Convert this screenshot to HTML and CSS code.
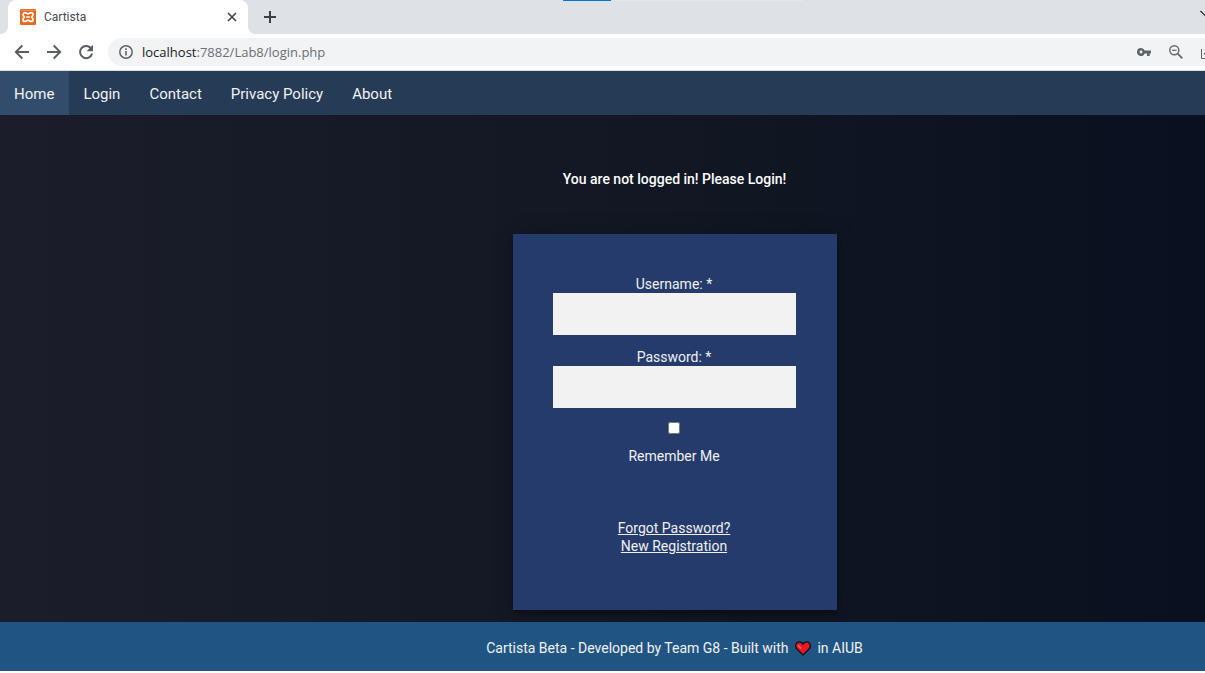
FILE: index.html
```html
<!DOCTYPE html>
<html lang="en">
<head>
<meta charset="utf-8">
<meta name="viewport" content="width=device-width, initial-scale=1">
<title>Cartista</title>
<link rel="stylesheet" href="styles.css">
</head>
<body>
<header class="browser">
  <div class="tab-strip">
    <div class="tab">
      <svg class="favicon" viewBox="0 0 16 16" aria-hidden="true">
        <rect width="16" height="16" rx="1.2" fill="#e8681c"/>
        <path d="M1 1.200h14" stroke="#f3a066" stroke-width=".8"/>
        <path d="M5.200 3.600C3.700 3.600 3 4.600 3 5.600c0 1.100.7 1.700 1.400 2.400C3.700 8.700 3 9.300 3 10.400c0 1.200.8 2 2 2 1.400 0 2.100-1.200 3-1.200s1.600 1.200 3 1.200c1.200 0 2-.8 2-2 0-1.100-.7-1.700-1.400-2.400.7-.7 1.400-1.300 1.400-2.400 0-1.200-.8-2-2.200-2C9.500 3.600 8.900 4.900 8 4.900S6.500 3.600 5.200 3.600Z" fill="none" stroke="#fff" stroke-width="1.700"/>
        <path d="M6.200 8h3.600" stroke="#fff" stroke-width="1.500"/>
      </svg>
      <span class="tab-title">Cartista</span>
      <button class="icon-button tab-close" type="button" aria-label="Close tab">
        <svg width="10" height="10" viewBox="0 0 10 10"><path d="M1 1l8 8M9 1L1 9" stroke="#45494d" stroke-width="1.700"/></svg>
      </button>
    </div>
    <button class="icon-button new-tab" type="button" aria-label="New tab">
      <svg width="14" height="14" viewBox="0 0 14 14"><path d="M7 1v12M1 7h12" stroke="#3c4043" stroke-width="2"/></svg>
    </button>
    <div class="load-bar"><div class="load-value"></div></div>
    <svg class="tab-search" width="12" height="8" viewBox="0 0 12 8" aria-hidden="true"><path d="M.5 1l5.500 5.500L11.500 1" fill="none" stroke="#202124" stroke-width="1.200"/></svg>
  </div>
  <div class="toolbar">
    <button class="icon-button" type="button" aria-label="Back">
      <svg width="16" height="16" viewBox="0 0 16 16"><path d="M15 8H2M8.300 1.500L1.800 8l6.500 6.500" fill="none" stroke="#5a5e63" stroke-width="1.900"/></svg>
    </button>
    <button class="icon-button" type="button" aria-label="Forward">
      <svg width="16" height="16" viewBox="0 0 16 16"><path d="M1 8h13M7.700 1.500L14.200 8l-6.500 6.500" fill="none" stroke="#5a5e63" stroke-width="1.900"/></svg>
    </button>
    <button class="icon-button" type="button" aria-label="Reload">
      <svg width="16" height="16" viewBox="0 0 16 16"><path d="M13.200 4.600A6.100 6.100 0 1 0 14.100 9.500" fill="none" stroke="#5a5e63" stroke-width="2"/><path d="M15 .8v6.400H8.600z" fill="#5a5e63"/></svg>
    </button>
    <div class="address">
      <svg width="14" height="14" viewBox="0 0 14 14" aria-hidden="true"><circle cx="7" cy="7" r="6.200" fill="none" stroke="#5f6368" stroke-width="1.500"/><path d="M7 6v4.500M7 3.300v1.600" stroke="#5f6368" stroke-width="1.600"/></svg>
      <span class="url"><span class="host">localhost</span>:7882/Lab8/login.php</span>
      <svg class="key" width="14" height="8" viewBox="0 0 14 8" aria-hidden="true"><path fill="#5f6368" fill-rule="evenodd" d="M4 0a4 4 0 1 0 3.700 5.400H10V8h2.700V5.400H14V2.600H7.700A4 4 0 0 0 4 0Zm0 2.600a1.400 1.400 0 1 1 0 2.800 1.400 1.400 0 0 1 0-2.800Z"/></svg>
      <svg class="lens" width="14" height="14" viewBox="0 0 14 14" aria-hidden="true"><circle cx="5.300" cy="5.300" r="4.500" fill="none" stroke="#666a6e" stroke-width="1.500"/><path d="M8.700 8.700l4.600 4.600" stroke="#666a6e" stroke-width="1.900"/><path d="M3 5.300h4.600" stroke="#666a6e" stroke-width="1.200"/></svg>
      <svg class="share" width="14" height="14" viewBox="0 0 14 14" aria-hidden="true"><path d="M1.500 3v9.500h11v-2" fill="none" stroke="#5f6368" stroke-width="1"/><path d="M3.500 9.500c.8-3.500 3-5 6-5V2L13 5.500 9.500 9V6.500C7 6.500 5.200 7.500 3.500 9.500Z" fill="#5f6368"/></svg>
    </div>
  </div>
</header>
<nav class="site-nav">
  <a class="nav-link active" href="#home">Home</a>
  <a class="nav-link" href="#login">Login</a>
  <a class="nav-link" href="#contact">Contact</a>
  <a class="nav-link" href="#privacy">Privacy Policy</a>
  <a class="nav-link" href="#about">About</a>
</nav>
<main class="content">
  <p class="notice">You are not logged in! Please Login!</p>
  <form class="card">
    <label for="username">Username: *</label>
    <input class="field" id="username" type="text">
    <label for="password">Password: *</label>
    <input class="field" id="password" type="password">
    <input class="remember" id="remember" type="checkbox">
    <label for="remember">Remember Me</label>
    <div class="links">
      <a href="#forgot">Forgot Password?</a>
      <a href="#register">New Registration</a>
    </div>
  </form>
</main>
<footer class="site-footer">
  <p>Cartista Beta - Developed by Team G8 - Built with
    <svg class="heart" width="16" height="15" viewBox="0 0 16 15" role="img" aria-label="love"><path d="M8 14L1.500 7.500C.2 6 .5 3.200 2 1.800 3.800.300 6.500.7 8 3 9.500.700 12.200.300 14 1.800c1.500 1.400 1.800 4.200.5 5.700Z" fill="#ec1624" stroke="#10131c" stroke-width="1.400"/><path d="M3 4.200l3 3.300" stroke="#f6685f" stroke-width="1.500"/></svg>
    in AIUB</p>
</footer>
</body>
</html>
```
FILE: styles.css
```css
* {
  box-sizing: border-box;
}

body {
  margin: 0;
  min-height: 100vh;
  display: flex;
  flex-direction: column;
  overflow-x: hidden;
  background: #fff;
  font-family: Roboto, "Liberation Sans", sans-serif;
  font-size: 14px;
  line-height: 18px;
  color: #f1f1f1;
}

p {
  margin: 0;
}

svg {
  display: block;
  flex: none;
}

.browser {
  overflow: hidden;
  border-bottom: 1px solid #dadce0;
  font-family: "Open Sans", "Noto Sans", sans-serif;
}

.icon-button {
  padding: 0;
  border: 0;
  background: none;
}

.tab-strip {
  position: relative;
  display: flex;
  align-items: center;
  height: 34px;
  padding-left: 8px;
  background: #dee1e6;
}

.tab {
  position: relative;
  display: flex;
  align-items: center;
  gap: 8px;
  width: 240px;
  height: 34px;
  padding: 0 11px 0 12px;
  border-radius: 8px 8px 0 0;
  background: #fff;
}

.tab::before,
.tab::after {
  content: "";
  position: absolute;
  bottom: 0;
  width: 8px;
  height: 8px;
}

.tab::before {
  right: 100%;
  background: radial-gradient(circle at 0 0, transparent 8px, #fff 8px);
}

.tab::after {
  left: 100%;
  background: radial-gradient(circle at 100% 0, transparent 8px, #fff 8px);
}

.favicon {
  width: 16px;
  height: 16px;
}

.tab-title {
  flex: 1;
  font-family: Roboto, sans-serif;
  font-size: 12px;
  color: #45494d;
}

.new-tab {
  margin-left: 15px;
}

.load-bar {
  position: absolute;
  top: 0;
  left: 563px;
  width: 241px;
  height: 1px;
  background: #e6e6e6;
}

.load-value {
  width: 48px;
  height: 1px;
  background: #0078d7;
}

.tab-search {
  position: absolute;
  top: 10px;
  right: -7px;
}

.toolbar {
  display: flex;
  align-items: center;
  gap: 16px;
  height: 36px;
  padding-left: 14px;
}

.address {
  flex: 1;
  display: flex;
  align-items: center;
  height: 28px;
  margin-left: -2px;
  padding-left: 11px;
  border-radius: 14px 0 0 14px;
  background: #f1f3f4;
}

.url {
  flex: 1;
  margin-left: 9px;
  font-size: 13px;
  color: #6b6f74;
}

.host {
  color: #202124;
}

.lens {
  margin-left: 18px;
}

.share {
  margin: 2px -9px 0 17px;
}

.site-nav {
  display: flex;
  background: #253b56;
}

.nav-link {
  padding: 14px 15px 12px 14px;
  font-size: 15px;
  line-height: 18px;
  color: #f2f2f2;
  text-decoration: none;
}

.nav-link.active {
  background: #324d6b;
}

.content {
  flex: 1;
  display: flex;
  flex-direction: column;
  align-items: center;
  padding: 55px 0 12px 144px;
  background: linear-gradient(to right, #1b1d2a, #121723 55%, #09101f);
}

.notice {
  margin-bottom: 46px;
  font-size: 14px;
  font-weight: 500;
  color: #fff;
}

.card {
  display: flex;
  flex-direction: column;
  align-items: center;
  width: 324px;
  padding: 41px 41px 55px 40px;
  background: #243b6b;
  box-shadow: 0 0 20px rgba(0, 0, 0, 0.2), 0 5px 5px rgba(0, 0, 0, 0.24);
}

.field {
  width: 100%;
  height: 42px;
  margin: 0 0 13px;
  padding: 12px;
  border: 0;
  border-radius: 0;
  background: #f2f2f2;
}

.remember {
  width: 12px;
  height: 12px;
  margin: 1px 0 13px;
}

.links {
  display: flex;
  flex-direction: column;
  align-items: center;
  margin-top: 54px;
}

.links a {
  color: #f1f1f1;
}

.site-footer {
  margin-bottom: 2px;
  padding: 17px 0 14px 144px;
  background: #205583;
  text-align: center;
}

.heart {
  display: inline-block;
  margin: 0 3px;
  vertical-align: -3px;
}
```
